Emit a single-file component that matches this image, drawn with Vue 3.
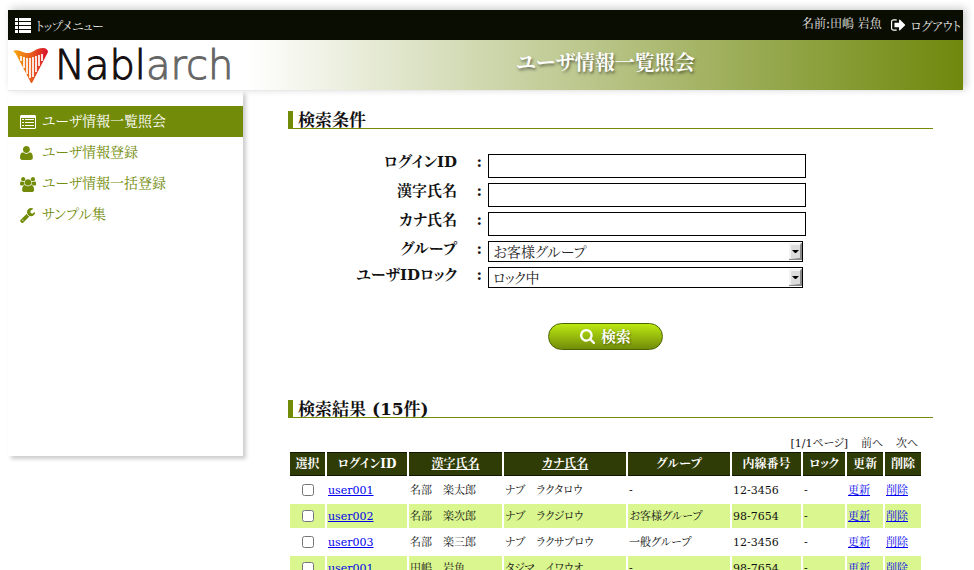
<template>
  <div class="page">
    <header class="header">
      <div class="top-bar">
        <a href="#" class="top-link">
          <svg class="icon-list" viewBox="0 0 16 15">
            <path d="M0 0h3v3H0zM4 0h12v3H4zM0 4h3v3H0zM4 4h12v3H4zM0 8h3v3H0zM4 8h12v3H4zM0 12h3v3H0zM4 12h12v3H4z" />
          </svg>
          トップメニュー
        </a>
        <div class="login-info">
          <span class="user-name">名前:田嶋 岩魚</span>
          <a href="#" class="top-link">
            <svg class="icon-logout" viewBox="0 0 1664 1536">
              <path d="M640 1312q0 96-32 96H288q-119 0-203.500-84.500T0 1120V416q0-119 84.500-203.500T288 128h320q32 0 32 96t-32 32H288q-66 0-113 47t-47 113v704q0 66 47 113t113 47h312q40 0 40 32z" />
              <path d="M1568 768q0 26-19 45l-544 544q-19 19-45 19t-45-19-19-45v-288H448q-26 0-45-19t-19-45V576q0-26 19-45t45-19h448V224q0-26 19-45t45-19 45 19l544 544q19 19 19 45z" />
            </svg>
            ログアウト
          </a>
        </div>
      </div>
      <div class="title-bar">
        <a href="#" class="logo">
          <svg class="harp" viewBox="0 0 36 36">
            <defs>
              <linearGradient id="harpColor" x1="0" x2="1">
                <stop offset="0" stop-color="#f7ab0a" />
                <stop offset="0.5" stop-color="#e9601c" />
                <stop offset="1" stop-color="#d8102c" />
              </linearGradient>
            </defs>
            <path fill="url(#harpColor)" d="M0 4C5 2 8 5 13 6c7 1 9-5 17-5 3 0 5 2 5 4L19 36h-1L4 9C3 7 2 5 0 4z" />
            <path stroke="#fff" stroke-width="1.700" fill="none" d="M8 9v5M11 10v11M14 11v16M17 11v20M20 10v20M23 9v16M26 8v11M29 7v7" />
          </svg>
          <span class="logo-text">Nabl<span class="logo-sub">arch</span></span>
        </a>
        <h1 class="page-title">ユーザ情報一覧照会</h1>
      </div>
    </header>

    <div class="body">
      <nav class="side-menu">
        <a
          v-for="item in menu"
          :key="item.label"
          href="#"
          :class="['menu-item', { active: item.active }]"
        >
          <svg class="menu-icon" :viewBox="item.box" preserveAspectRatio="xMinYMid meet">
            <path :d="item.path" :fill-rule="item.active ? 'evenodd' : 'nonzero'" />
          </svg>
          {{ item.label }}
        </a>
      </nav>

      <main class="content">
        <section class="search">
          <h2>検索条件</h2>
          <form class="search-form" @submit.prevent>
            <template v-for="field in fields" :key="field.id">
              <label :for="field.id">{{ field.label }}</label>
              <span class="colon">:</span>
              <select v-if="field.options" :id="field.id" v-model="field.value">
                <option v-for="option in field.options" :key="option">{{ option }}</option>
              </select>
              <input v-else :id="field.id" v-model="field.value" type="text" />
            </template>
            <button type="submit" class="search-button">
              <svg viewBox="64 128 1664 1664">
                <path d="M1216 832q0-185-131.500-316.500t-316.500-131.500-316.500 131.500-131.500 316.500 131.500 316.500 316.500 131.500 316.500-131.500 131.500-316.500zm512 832q0 52-38 90t-90 38q-54 0-90-38l-343-342q-179 124-399 124-143 0-273.500-55.500t-225-150-150-225-55.500-273.500 55.500-273.500 150-225 225-150 273.500-55.500 273.500 55.500 225 150 150 225 55.500 273.500q0 220-124 399l343 343q37 37 37 90z" />
              </svg>
              検索
            </button>
          </form>
        </section>

        <section class="result">
          <h2>検索結果 (15件)</h2>
          <div class="pager">
            <span>[1/1ページ]</span>
            <span>前へ</span>
            <span>次へ</span>
          </div>
          <table>
            <colgroup>
              <col v-for="col in columns" :key="col.label" :style="{ width: col.width + 'px' }" />
            </colgroup>
            <thead>
              <tr>
                <th v-for="col in columns" :key="col.label">
                  <a v-if="col.sortable" href="#">{{ col.label }}</a>
                  <template v-else>{{ col.label }}</template>
                </th>
              </tr>
            </thead>
            <tbody>
              <tr v-for="(user, index) in users" :key="index">
                <td class="check"><input type="checkbox" :aria-label="user.id" /></td>
                <td><a href="#">{{ user.id }}</a></td>
                <td>{{ user.kanji }}</td>
                <td>{{ user.kana }}</td>
                <td>{{ user.group }}</td>
                <td>{{ user.tel }}</td>
                <td>-</td>
                <td><a href="#">更新</a></td>
                <td><a href="#">削除</a></td>
              </tr>
            </tbody>
          </table>
        </section>
      </main>
    </div>
  </div>
</template>

<script setup>
import { ref } from 'vue'

const menu = [
  {
    label: 'ユーザ情報一覧照会',
    active: true,
    box: '0 0 16 14',
    path: 'M1 0h14l1 1v12l-1 1H1l-1-1V1zM1 3v10h14V3zM2 4h2v1H2zM5 4h9v1H5zM2 7h2v1H2zM5 7h9v1H5zM2 10h2v1H2zM5 10h9v1H5z'
  },
  {
    label: 'ユーザ情報登録',
    box: '0 0 1408 1536',
    path: 'M1408 1277q0 120-73 189.500t-194 69.500h-874q-121 0-194-69.500t-73-189.500q0-53 3.500-103.500t14-109 26.500-108.500 43-97.500 62-81 85.500-53.500 111.500-20q9 0 42 21.500t74.500 48 108 48 133.500 21.500 133.500-21.500 108-48 74.500-48 42-21.500q61 0 111.500 20t85.500 53.500 62 81 43 97.500 26.500 108.500 14 109 3.500 103.500zm-320-893q0 159-112.500 271.500t-271.500 112.500-271.500-112.500-112.500-271.500 112.500-271.500 271.500-112.500 271.500 112.500 112.500 271.500z'
  },
  {
    label: 'ユーザ情報一括登録',
    box: '0 0 1920 1664',
    path: 'M593 896q-162 5-265 128h-134q-82 0-138-40.500t-56-118.500q0-353 124-353 6 0 43.500 21t97.500 42.500 119 21.500q67 0 133-23-5 37-5 66 0 139 81 256zm1071 637q0 120-73 189.500t-194 69.500h-874q-121 0-194-69.500t-73-189.500q0-53 3.500-103.500t14-109 26.500-108.500 43-97.500 62-81 85.500-53.500 111.500-20q10 0 43 21.500t73 48 107 48 135 21.500 135-21.500 107-48 73-48 43-21.500q61 0 111.500 20t85.500 53.500 62 81 43 97.500 26.500 108.500 14 109 3.500 103.500zm-1024-1277q0 106-75 181t-181 75-181-75-75-181 75-181 181-75 181 75 75 181zm704 384q0 159-112.500 271.500t-271.500 112.500-271.500-112.500-112.500-271.500 112.500-271.500 271.500-112.500 271.500 112.500 112.500 271.500zm576 225q0 78-56 118.500t-138 40.500h-134q-103-123-265-128 81-117 81-256 0-29-5-66 66 23 133 23 59 0 119-21.500t97.500-42.500 43.500-21q124 0 124 353zm-128-609q0 106-75 181t-181 75-181-75-75-181 75-181 181-75 181 75 75 181z'
  },
  {
    label: 'サンプル集',
    box: '64 128 1664 1536',
    path: 'M448 1472q0-26-19-45t-45-19-45 19-19 45 19 45 45 19 45-19 19-45zm644-420l-682 682q-37 37-90 37-52 0-91-37l-106-108q-38-36-38-90 0-53 38-91l681-681q39 98 114.500 173.500t173.500 114.500zm634-435q0 39-23 106-47 134-164.500 217.500t-258.500 83.500q-185 0-316.500-131.500t-131.500-316.500 131.500-316.500 316.500-131.500q58 0 121.500 16.500t107.500 46.500q16 11 16 28t-16 28l-293 169v224l193 107q5-3 79-48.500t135.500-81 70.500-35.500q15 0 23.500 10t8.500 25z'
  }
]

const fields = ref([
  { id: 'loginId', label: 'ログインID', value: '' },
  { id: 'kanjiName', label: '漢字氏名', value: '' },
  { id: 'kanaName', label: 'カナ氏名', value: '' },
  { id: 'group', label: 'グループ', value: 'お客様グループ', options: ['お客様グループ', '一般グループ'] },
  { id: 'idLock', label: 'ユーザIDロック', value: 'ロック中', options: ['ロック中'] }
])

const columns = [
  { label: '選択', width: 35 },
  { label: 'ログインID', width: 80 },
  { label: '漢字氏名', width: 93, sortable: true },
  { label: 'カナ氏名', width: 122, sortable: true },
  { label: 'グループ', width: 102 },
  { label: '内線番号', width: 69 },
  { label: 'ロック', width: 42 },
  { label: '更新', width: 36 },
  { label: '削除', width: 36 }
]

const users = [
  { id: 'user001', kanji: '名部　楽太郎', kana: 'ナブ　ラクタロウ', group: '-', tel: '12-3456' },
  { id: 'user002', kanji: '名部　楽次郎', kana: 'ナブ　ラクジロウ', group: 'お客様グループ', tel: '98-7654' },
  { id: 'user003', kanji: '名部　楽三郎', kana: 'ナブ　ラクサブロウ', group: '一般グループ', tel: '12-3456' },
  { id: 'user001', kanji: '田嶋　岩魚', kana: 'タジマ　イワウオ', group: '-', tel: '98-7654' }
]
</script>

<style>
body {
  margin: 0;
  background: #fff;
}
</style>

<style scoped>
.page {
  box-sizing: border-box;
  height: 100vh;
  overflow: hidden;
  padding: 10px 11px 0 8px;
  color: #111;
  font-family: 'DejaVu Serif', 'Noto Serif CJK JP', 'Noto Sans CJK JP', serif;
  font-feature-settings: 'palt';
  font-size: 11px;
}

.header {
  border-bottom: 1px solid #eaeaea;
  box-shadow: 3px -2px 8px rgba(0, 0, 0, 0.2);
}

.top-bar {
  display: flex;
  justify-content: space-between;
  align-items: center;
  height: 30px;
  padding: 0 2px 0 7px;
  background: #0a0d02;
  color: #e8e8e8;
}

.top-link {
  display: flex;
  align-items: center;
  gap: 5px;
  color: #e8e8e8;
  font-size: 12px;
  text-decoration: none;
}

.top-link svg {
  fill: #fff;
}

.icon-list {
  width: 16px;
  height: 15px;
}

.icon-logout {
  width: 15px;
  height: 14px;
}

.login-info {
  display: flex;
  align-items: center;
  gap: 9px;
}

.user-name {
  line-height: 14px;
  padding-bottom: 2px;
  font-size: 12px;
}

.title-bar {
  display: flex;
  align-items: center;
  height: 50px;
  background: linear-gradient(to right, #fff 25%, #6f880c);
}

.logo {
  display: flex;
  align-items: center;
  gap: 6px;
  width: 235px;
  padding-left: 5px;
  text-decoration: none;
}

.harp {
  width: 36px;
  height: 36px;
}

.logo-text {
  color: #130c0e;
  font-family: 'DejaVu Sans', sans-serif;
  font-size: 40px;
  font-weight: 200;
  line-height: 50px;
  -webkit-text-stroke: 1px currentColor;
}

.logo-sub {
  color: #666;
}

.page-title {
  flex: 1;
  margin: 0;
  color: #fff;
  font-size: 20px;
  line-height: 46px;
  height: 50px;
  text-align: center;
  text-shadow: 1px 2px 3px rgba(0, 0, 0, 0.5);
}

.body {
  display: flex;
  align-items: flex-start;
}

.side-menu {
  box-sizing: border-box;
  width: 235px;
  height: 365px;
  padding-top: 15px;
  box-shadow: 3px 3px 4px rgba(0, 0, 0, 0.2);
}

.menu-item {
  display: flex;
  align-items: center;
  gap: 4px;
  height: 31px;
  padding-left: 12px;
  color: #728c0a;
  font-size: 14px;
  line-height: 29px;
  text-decoration: none;
}

.menu-item.active {
  background: #728c0a;
  color: #fff;
}

.menu-icon {
  width: 18px;
  height: 14px;
  fill: currentColor;
  overflow: visible;
}

.content {
  flex: 1;
  padding: 20px 30px 0 45px;
}

h2 {
  height: 17px;
  margin: 0;
  padding-left: 5px;
  border-left: 5px solid #728c0a;
  border-bottom: 1px solid #728c0a;
  font-size: 17px;
  line-height: 18px;
}

.search-form {
  display: grid;
  grid-template-columns: 169px 31px 1fr;
  row-gap: 5px;
  margin: 25px 10px 50px 0;
}

.search-form label,
.colon {
  height: 16px;
  font-size: 15px;
  font-weight: bold;
  line-height: 16px;
  text-align: right;
}

.colon {
  padding-right: 6px;
}

.search-form input {
  box-sizing: border-box;
  width: 318px;
  height: 24px;
  border: 1px solid #000;
}

.search-form select {
  box-sizing: border-box;
  width: 315px;
  height: 21px;
  padding: 0 4px;
  appearance: none;
  border: 1px solid #000;
  border-radius: 0;
  background: #fff url("data:image/svg+xml,%3Csvg xmlns='http://www.w3.org/2000/svg' width='13' height='17'%3E%3Cpath fill='%23888' d='M0 0h13v17H0z'/%3E%3Cpath fill='%23f4f4f4' d='M0 0h12l-1 2v13l-11 1z'/%3E%3Cpath fill='%23dcdcdc' d='M2 2h9v13H2z'/%3E%3Cpath d='M3 7h7l-3 3H6z'/%3E%3C/svg%3E") no-repeat right center;
  color: #222;
  font-family: inherit;
  font-feature-settings: inherit;
  font-size: 14px;
}

.search-button {
  display: flex;
  grid-column: 1 / -1;
  justify-content: center;
  align-items: center;
  justify-self: center;
  gap: 6px;
  width: 115px;
  height: 27px;
  margin-top: 30px;
  padding: 0;
  border: 1px solid #4c6400;
  border-radius: 14px;
  background: linear-gradient(#bce910, #728c0a);
  color: #fff;
  font-family: inherit;
  font-size: 15px;
  font-weight: bold;
  line-height: 24px;
  text-shadow: 1px 1px 2px rgba(0, 0, 0, 0.4);
}

.search-button svg {
  width: 15px;
  height: 15px;
  fill: #fff;
}

.pager {
  display: flex;
  justify-content: flex-end;
  gap: 13px;
  margin: 20px 15px 0 0;
  line-height: 12px;
}

table {
  width: 635px;
  border-spacing: 2px 2px;
  table-layout: fixed;
}

th,
td {
  box-sizing: border-box;
  height: 24px;
  line-height: 16px;
  white-space: nowrap;
}

th {
  padding: 0;
  border-top: 1px solid #111600;
  border-bottom: 1px solid #111600;
  background: #303c06;
  color: #fff;
  font-size: 12px;
}

th a {
  color: #fff;
}

td {
  padding: 2px 1px 0;
  text-align: left;
}

td a {
  color: #00e;
}

tbody tr:nth-child(even) td {
  background: #daf68e;
}

.check {
  padding: 0;
  text-align: center;
}

.check input {
  width: 12px;
  height: 12px;
  margin: 0;
  vertical-align: middle;
}
</style>
